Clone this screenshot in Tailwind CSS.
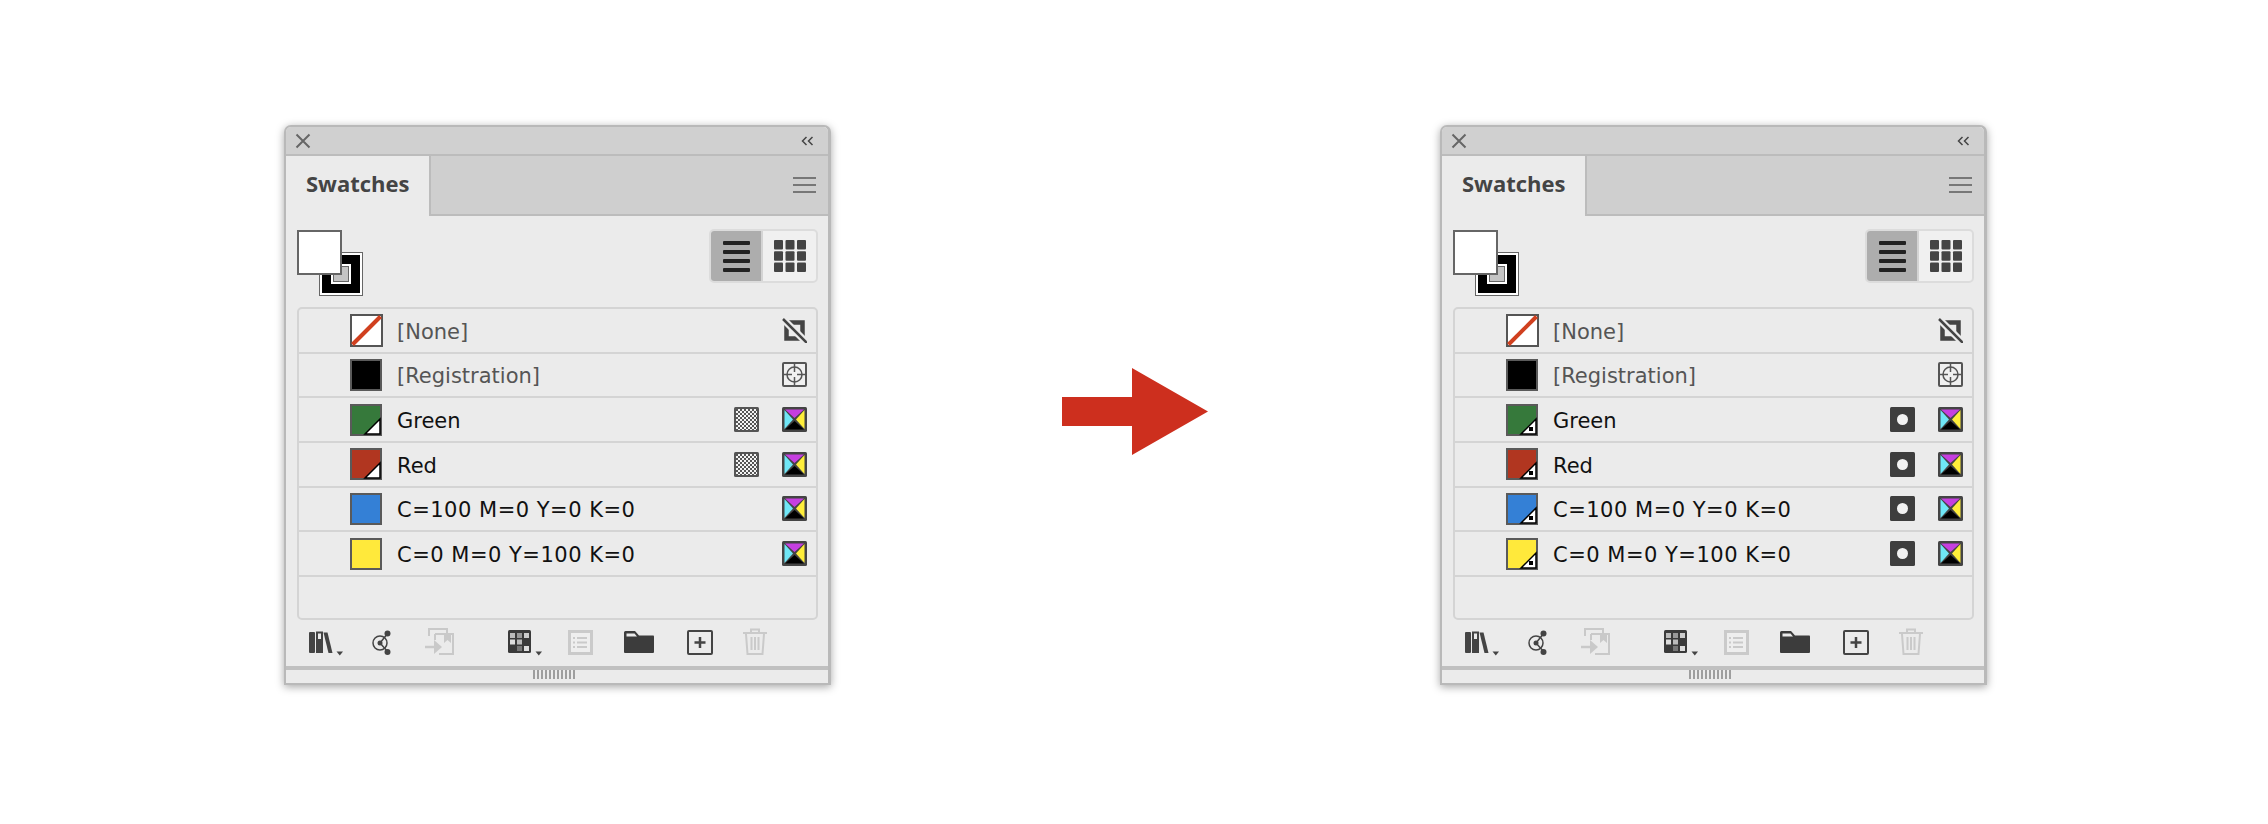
<!DOCTYPE html>
<html lang="en">
<head>
  <meta charset="UTF-8">
  <title>Swatches</title>
  <script src="https://cdn.jsdelivr.net/npm/@tailwindcss/browser@4"></script>
</head>
<body class="bg-white w-[2268px] h-[824px] overflow-hidden">
  <svg class="absolute w-0 h-0">
    <defs>
      <pattern id="checker" width="4" height="4" patternUnits="userSpaceOnUse">
        <rect width="4" height="4" fill="#f4f4f4"/>
        <rect width="2" height="2" fill="#555"/>
        <rect x="2" y="2" width="2" height="2" fill="#555"/>
      </pattern>
      <symbol id="process" viewBox="0 0 25 25">
        <rect width="25" height="25" rx="1.5" fill="#444"/>
        <path d="M3 2.5h19l-9.5 8.5z" fill="#c63fe0"/>
        <path d="M22.500 3v19l-8.500-9.500z" fill="#ffee3a"/>
        <path d="M3 22.500h19l-9.500-8.500z" fill="#000"/>
        <path d="M2.500 3v19l8.500-9.500z" fill="#6fe6f6"/>
      </symbol>
    </defs>
  </svg>

  <main class="flex items-start pt-[125px] pl-[284px]">
    <div id="panel-left"></div>
    <svg class="ml-[231px] mt-[243px] w-[146px] h-[87px]" viewBox="0 0 146 87">
      <path d="M0 29H70V0L146 43.500L70 87V58H0z" fill="#cd2f1e"/>
    </svg>
    <div id="panel-right" class="ml-[232px]"></div>
  </main>

  <script>
    const rows = [
      { name: '[None]', fill: 'none', right: 'none', grey: true },
      { name: '[Registration]', fill: '#000', right: 'reg', grey: true },
      { name: 'Green', fill: '#36793b', spot: true },
      { name: 'Red', fill: '#b13620', spot: true },
      { name: 'C=100 M=0 Y=0 K=0', fill: '#3480d6', spot: 'after', wide: true },
      { name: 'C=0 M=0 Y=100 K=0', fill: '#ffe93b', spot: 'after', wide: true },
    ];

    function swatch(row, spotted) {
      if (row.fill === 'none') {
        return `<svg class="w-[33px] h-[33px] shrink-0" viewBox="0 0 33 33"><rect x="1" y="1" width="31" height="31" fill="#fff" stroke="#555" stroke-width="2"/><path d="M2.500 30.500L30.500 2.500" stroke="#d0401f" stroke-width="4"/></svg>`;
      }
      let corner = '';
      if (row.spot === true && !spotted) {
        corner = `<path d="M15 30L30 15V30z" fill="#fff" stroke="#000" stroke-width="1.500"/>`;
      }
      if (row.spot && spotted) {
        corner = `<path d="M15 30L30 15V30z" fill="#fff" stroke="#000" stroke-width="1.500"/><rect x="23" y="23" width="4" height="4" fill="#000"/>`;
      }
      return `<svg class="w-[32px] h-[32px] mr-px shrink-0" viewBox="0 0 32 32"><rect x="1" y="1" width="30" height="30" fill="${row.fill}" stroke="#5a5a5a" stroke-width="2"/>${corner}</svg>`;
    }

    function spotIcon(row, spotted) {
      if (row.spot === true && !spotted) {
        return `<svg class="w-[25px] h-[25px] mr-[23px]" viewBox="0 0 25 25"><rect width="25" height="25" rx="1.500" fill="#555"/><rect x="2" y="2" width="21" height="21" fill="url(#checker)"/></svg>`;
      }
      if (row.spot && spotted) {
        return `<svg class="w-[25px] h-[25px] mr-[23px]" viewBox="0 0 25 25"><rect width="25" height="25" rx="1.500" fill="#3e3e3e"/><circle cx="12.500" cy="12.500" r="5.500" fill="#f2f2f2"/></svg>`;
      }
      return '';
    }

    function modeIcon(row) {
      if (row.right === 'none') {
        return `<svg class="w-[25px] h-[25px]" viewBox="0 0 25 25"><rect x="4.500" y="4.500" width="16" height="16" fill="none" stroke="#444" stroke-width="4.500"/><path d="M1 1L25 25" stroke="#ebebeb" stroke-width="7"/><path d="M1 1L25 25" stroke="#444" stroke-width="2.500"/></svg>`;
      }
      if (row.right === 'reg') {
        return `<svg class="w-[25px] h-[25px]" viewBox="0 0 25 25"><rect x="1" y="1" width="23" height="23" rx="1" fill="#f0f0f0" stroke="#555" stroke-width="2"/><circle cx="12.500" cy="12.500" r="7.500" fill="none" stroke="#555" stroke-width="1.500"/><path d="M12.500 2V10M12.500 15V23M2 12.500H10M15 12.500H23" stroke="#555" stroke-width="1.500"/></svg>`;
      }
      return `<svg class="w-[25px] h-[25px]"><use href="#process"/></svg>`;
    }

    function listRow(row, spotted) {
      const spot = spotted ? true : row.spot === true;
      const withSpot = row.spot && spot;
      return `<div class="h-[44.67px] shrink-0 flex items-center pl-[51px] pr-[9px] border-b-2 border-[#d4d4d4]">
        ${swatch(row, spotted)}
        <span class="ml-[14px] flex-1 pt-1 text-[21px] ${row.wide ? 'tracking-[0.5px]' : ''} ${row.grey ? 'text-[#555]' : 'text-[#111]'}">${row.name}</span>
        ${withSpot ? spotIcon(row, spotted) : ''}
        ${modeIcon(row)}
      </div>`;
    }

    function panel(spotted) {
      return `<section class="w-[547px] h-[560px] border-2 border-[#b9b9b9] border-r-[3px] rounded-t-[7px] bg-[#ebebeb] shadow-[0_2px_8px_rgba(0,0,0,0.35)] font-['DejaVu_Sans',sans-serif] flex flex-col">
        <div class="h-[29px] shrink-0 bg-[#d0d0d0] border-b-2 border-[#bcbcbc] rounded-t-[5px] flex items-center justify-between pl-[9px] pr-[14px]">
          <svg class="w-[16px] h-[16px]" viewBox="0 0 16 16"><path d="M1.500 1.500L14.500 14.500M14.500 1.500L1.500 14.500" stroke="#666" stroke-width="2"/></svg>
          <svg class="w-[13px] h-[10px]" viewBox="0 0 13 10"><path d="M5.500 1L1.500 5L5.500 9M11.500 1L7.500 5L11.500 9" fill="none" stroke="#444" stroke-width="1.500"/></svg>
        </div>
        <div class="h-[60px] shrink-0 flex">
          <div class="w-[145px] bg-[#ebebeb] border-r-2 border-[#bcbcbc] pl-[20px] pb-[6px] flex items-center text-[22px] font-bold text-[#444] font-['Open_Sans',sans-serif]">Swatches</div>
          <div class="flex-1 bg-[#cfcfcf] border-b-2 border-[#bcbcbc] flex items-center justify-end pr-[12px]">
            <svg class="w-[23px] h-[18px]" viewBox="0 0 23 18"><path d="M0 2H23M0 9H23M0 16H23" stroke="#777" stroke-width="2"/></svg>
          </div>
        </div>
        <div class="flex-1 flex flex-col pt-[13px] pl-[11px] pr-[10px]">
          <div class="h-[78px] shrink-0 flex justify-between items-start">
            <div class="relative w-[67px] h-[67px] mt-px">
              <svg class="absolute left-[22px] top-[22px] w-[44px] h-[44px]" viewBox="0 0 44 44">
                <rect x="0.500" y="0.500" width="43" height="43" fill="#fff" stroke="#666"/>
                <rect x="3" y="3" width="38" height="38" fill="#000"/>
                <rect x="12" y="12" width="20" height="20" fill="#fff"/>
                <rect x="14.500" y="14.500" width="15" height="15" fill="#c4c4c4" stroke="#666"/>
              </svg>
              <div class="absolute left-0 top-0 w-[45px] h-[45px] bg-white border-2 border-[#666]"></div>
            </div>
            <div class="flex w-[109px] h-[54px] border-2 border-[#dcdcdc] rounded-[5px] bg-[#f0f0f0] overflow-hidden">
              <div class="w-[52px] bg-[#adadad] border-r-2 border-[#d4d4d4] flex flex-col items-center justify-center gap-[5px]">
                <div class="w-[27px] h-1 rounded-[1px] bg-[#222]"></div>
                <div class="w-[27px] h-1 rounded-[1px] bg-[#222]"></div>
                <div class="w-[27px] h-1 rounded-[1px] bg-[#222]"></div>
                <div class="w-[27px] h-1 rounded-[1px] bg-[#222]"></div>
              </div>
              <div class="flex-1 flex items-center justify-center">
                <svg class="w-[32px] h-[32px]" viewBox="0 0 32 32" fill="#444">
                  <rect width="9" height="9.500" rx="1"/><rect x="11.500" width="9" height="9.500" rx="1"/><rect x="23" width="9" height="9.500" rx="1"/>
                  <rect y="11.250" width="9" height="9.500" rx="1"/><rect x="11.500" y="11.250" width="9" height="9.500" rx="1"/><rect x="23" y="11.250" width="9" height="9.500" rx="1"/>
                  <rect y="22.500" width="9" height="9.500" rx="1"/><rect x="11.500" y="22.500" width="9" height="9.500" rx="1"/><rect x="23" y="22.500" width="9" height="9.500" rx="1"/>
                </svg>
              </div>
            </div>
          </div>
          <div class="h-[313px] shrink-0 border-2 border-[#d4d4d4] rounded-[5px] flex flex-col">
            ${rows.map(row => listRow(row, spotted)).join('')}
          </div>
          <div class="h-[46px] shrink-0 flex items-start pt-2 -ml-[11px] pl-[23px]">
            <svg class="w-[34px] h-[28px]" viewBox="0 0 34 28" fill="#444"><rect y="4" width="6" height="21" rx="1"/><path d="M7 3.500H14V25H7zM9 5.500V11H12V5.500z" fill-rule="evenodd"/><path d="M14.500 4.500H18.500L23.500 25H19.500z"/><path d="M27.500 23.500H34L30.750 27.500z"/></svg>
            <svg class="ml-[28px] w-[23px] h-[28px]" viewBox="0 0 23 28"><circle cx="9" cy="15" r="7" fill="none" stroke="#444" stroke-width="1.500"/><circle cx="9" cy="15" r="2.500" fill="#444"/><path d="M9 15L17 5M9 15L17 24" stroke="#444" stroke-width="1.500"/><circle cx="16.500" cy="5.500" r="3" fill="#444"/><circle cx="16.500" cy="24" r="3" fill="#444"/></svg>
            <svg class="ml-[30px] w-[32px] h-[28px]" viewBox="0 0 32 28" fill="none" stroke="#c9c9c9" stroke-width="2"><path d="M5 8V1H23V5"/><path d="M11 6H29V26H15M11 6V12"/><path d="M20 6H27V15L23.500 12L20 15z" fill="#c9c9c9" stroke="none"/><path d="M1 19H10" stroke-width="2.500"/><path d="M10 12L18 19L10 26z" fill="#c9c9c9" stroke="none"/></svg>
            <svg class="ml-[52px] w-[35px] h-[28px]" viewBox="0 0 35 28"><rect y="2" width="23" height="23" rx="1.500" fill="#3a3a3a"/><rect x="2" y="5" width="5" height="5" fill="#bbb"/><rect x="9" y="5" width="5" height="5" fill="#999"/><rect x="16" y="5" width="5" height="5" fill="#ccc"/><rect x="2" y="11.500" width="5" height="5" fill="#ddd"/><rect x="9" y="11.500" width="5" height="5" fill="#bbb"/><rect x="16" y="18" width="5" height="5" fill="#ddd"/><rect x="9" y="18" width="5" height="5" fill="#777"/><path d="M27.500 23.500H34L30.750 27.500z" fill="#444"/></svg>
            <svg class="ml-[25px] w-[25px] h-[28px]" viewBox="0 0 25 28"><rect x="1.500" y="3.500" width="22" height="22" fill="#eee" stroke="#cacaca" stroke-width="3"/><path d="M9 10H19M9 14.500H19M9 19H19" stroke="#cacaca" stroke-width="2"/><path d="M5 10H7M5 14.500H7M5 19H7" stroke="#cacaca" stroke-width="2"/></svg>
            <svg class="ml-[31px] w-[31px] h-[28px]" viewBox="0 0 31 28"><path d="M0 4.500Q0 3 1.500 3H11L15 7.500H29.500Q30 7.500 30 9V24Q30 25 29 25H1Q0 25 0 24z" fill="#3c3c3c"/><path d="M2.500 5.500H10.500L13 8.500H2.500z" fill="#ebebeb"/></svg>
            <svg class="ml-[32px] w-[26px] h-[28px]" viewBox="0 0 26 28"><rect x="1" y="3" width="24" height="23" rx="1" fill="none" stroke="#444" stroke-width="2"/><path d="M13 9V20M7.500 14.500H18.500" stroke="#444" stroke-width="2.500"/></svg>
            <svg class="ml-[30px] w-[25px] h-[28px]" viewBox="0 0 25 28" fill="none" stroke="#cacaca" stroke-width="2"><path d="M0 5H24"/><path d="M8 4.500V1.500H16V4.500"/><path d="M3 6L4.500 26H19.500L21 6"/><path d="M8.500 9V22M12 9V22M15.500 9V22"/></svg>
          </div>
        </div>
        <div class="h-1 shrink-0 bg-[#c0c0c0]"></div>
        <div class="h-[13px] shrink-0 flex justify-center pr-[4px]">
          <div class="w-[44px] h-[9px] bg-[repeating-linear-gradient(90deg,#9e9e9e_0,#9e9e9e_2px,transparent_2px,transparent_4px)]"></div>
        </div>
      </section>`;
    }

    document.getElementById('panel-left').innerHTML = panel(false);
    document.getElementById('panel-right').innerHTML = panel(true);
  </script>
</body>
</html>
